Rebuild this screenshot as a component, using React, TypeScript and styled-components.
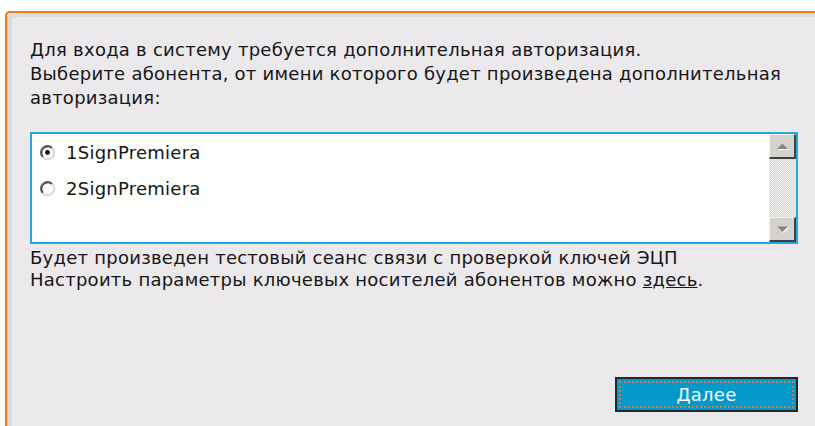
import styled, { createGlobalStyle } from "styled-components";

const GlobalStyle = createGlobalStyle`
  html, body {
    margin: 0;
    background: #ffffff;
  }
  body {
    font-family: "DejaVu Sans", Verdana, sans-serif;
    font-size: 18px;
    letter-spacing: 0.25px;
    color: #161616;
  }
`;

const accounts = ["1SignPremiera", "2SignPremiera"];

function Radio({ checked }: { checked: boolean }) {
  return (
    <svg width="15" height="15" viewBox="0 0 15 15">
      <circle cx="7.5" cy="7.5" r="7" fill="#fdfdfd" />
      <path d="M12.45 2.55 A7 7 0 0 0 2.55 12.45" fill="none" stroke="#707070" strokeWidth="1.2" />
      <path d="M11.74 3.26 A6 6 0 0 0 3.26 11.74" fill="none" stroke="#262626" strokeWidth="1.2" />
      <path d="M2.55 12.45 A7 7 0 0 0 12.45 2.55" fill="none" stroke="#cfcfcf" strokeWidth="1.2" />
      <path d="M3.26 11.74 A6 6 0 0 0 11.74 3.26" fill="none" stroke="#e2e0da" strokeWidth="1" />
      {checked && <circle cx="7.5" cy="7.5" r="2.4" fill="#111" />}
    </svg>
  );
}

function Arrow({ up }: { up: boolean }) {
  const pts = up ? "3,9 14,9 8.5,3.5" : "3,3.5 14,3.5 8.5,9";
  return (
    <svg width="17" height="13" viewBox="0 0 17 13">
      <polygon points={pts} fill="#ffffff" transform="translate(1 1)" />
      <polygon points={pts} fill="#858585" />
    </svg>
  );
}

function App() {
  return (
    <>
      <GlobalStyle />
      <Page>
        <Panel>
          <Intro>
            Для входа в систему требуется дополнительная авторизация.
            <br />
            Выберите абонента, от имени которого будет произведена дополнительная
            <br />
            авторизация:
          </Intro>

          <ListBox>
            <Options>
              {accounts.map((name, i) => (
                <Option key={name}>
                  <Radio checked={i === 0} />
                  <span>{name}</span>
                </Option>
              ))}
            </Options>
            <ScrollBar>
              <ScrollButton>
                <Arrow up />
              </ScrollButton>
              <Track />
              <ScrollButton>
                <Arrow up={false} />
              </ScrollButton>
            </ScrollBar>
          </ListBox>

          <Note>
            Будет произведен тестовый сеанс связи с проверкой ключей ЭЦП
            <br />
            Настроить параметры ключевых носителей абонентов можно <a href="#">здесь</a>.
          </Note>

          <Footer>
            <NextButton>Далее</NextButton>
          </Footer>
        </Panel>
      </Page>
    </>
  );
}

const Page = styled.div`
  box-sizing: border-box;
  height: 426px;
  padding: 11px 0 0 5px;
`;

const Panel = styled.div`
  box-sizing: border-box;
  height: 100%;
  display: flex;
  flex-direction: column;
  padding: 25px 17px 14px 23px;
  background: #ebe9ec;
  border-top: 2px solid #f47a22;
  border-left: 2px solid #f47a22;
  border-top-left-radius: 5px;
  box-shadow: inset 5px 4px 0 #dcdcd8;
`;

const Intro = styled.p`
  margin: 0;
  line-height: 24px;
  white-space: nowrap;
`;

const ListBox = styled.div`
  display: flex;
  height: 108px;
  margin-top: 22px;
  border: 2px solid #27a8df;
  background: #fbfefb;
`;

const Options = styled.div`
  flex: 1;
  padding-left: 8px;
`;

const Option = styled.label`
  display: flex;
  align-items: center;
  gap: 11px;
  height: 35px;
  padding-top: 1px;
`;

const ScrollBar = styled.div`
  width: 27px;
  display: flex;
  flex-direction: column;
`;

const ScrollButton = styled.div`
  box-sizing: border-box;
  height: 25px;
  display: flex;
  align-items: center;
  justify-content: center;
  background: #d6d3ce;
  border-top: 1px solid #f2f1ee;
  border-left: 1px solid #f2f1ee;
  border-right: 2px solid #404040;
  border-bottom: 2px solid #404040;
`;

const Track = styled.div`
  flex: 1;
  background: repeating-conic-gradient(#d6d3ce 0% 25%, #f4f3f1 0% 50%) 0 0 / 2px 2px;
`;

const Note = styled.p`
  margin: 3px 0 0;
  line-height: 22px;
  white-space: nowrap;

  a {
    color: inherit;
    text-decoration: underline;
  }
`;

const Footer = styled.div`
  margin-top: auto;
  display: flex;
  justify-content: flex-end;
`;

const NextButton = styled.button`
  width: 183px;
  height: 35px;
  padding: 0;
  border: 2px solid #1c2a30;
  background: #0399cb;
  color: #ffffff;
  font-family: "DejaVu Sans", Verdana, sans-serif;
  font-size: 18px;
  letter-spacing: 0.25px;
  outline: 2px dotted #d9764a;
  outline-offset: -6px;
  cursor: pointer;
`;

export default App;
